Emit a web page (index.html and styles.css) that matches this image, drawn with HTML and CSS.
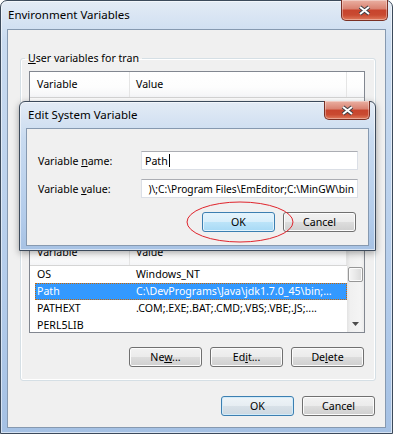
FILE: index.html
```html
<!DOCTYPE html>
<html lang="en">
<head>
    <meta charset="UTF-8">
    <title>Environment Variables</title>
    <link rel="stylesheet" href="styles.css">
</head>
<body>
    <div class="window">
        <div class="titlebar">
            <span class="title">Environment Variables</span>
            <div class="close">
                <svg width="13" height="11" viewBox="0 0 13 11"><path d="M2 2l9 7M11 2l-9 7" stroke="#3d3f44" stroke-width="4"/><path d="M2 2l9 7M11 2l-9 7" stroke="#fff" stroke-width="2"/></svg>
            </div>
        </div>
        <div class="client">
            <!-- lower half of this group sits under the edit dialog -->
            <fieldset class="group group-user">
                <legend><u>U</u>ser variables for tran</legend>
                <div class="list">
                    <div class="list-body">
                        <div class="list-head">
                            <div class="col-name">Variable</div>
                            <div class="col-value">Value</div>
                            <div class="col-fill"></div>
                        </div>
                    </div>
                </div>
            </fieldset>

            <fieldset class="group group-system">
                <legend><u>S</u>ystem variables</legend>
                <div class="list">
                    <div class="list-body">
                        <div class="list-head">
                            <div class="col-name">Variable</div>
                            <div class="col-value">Value</div>
                        </div>
                        <div class="row"><div class="cell-name">OS</div><div class="cell-value">Windows_NT</div></div>
                        <div class="row selected"><div class="cell-name">Path</div><div class="cell-value">C:\DevPrograms\Java\jdk1.7.0_45\bin;...</div></div>
                        <div class="row"><div class="cell-name">PATHEXT</div><div class="cell-value">.COM;.EXE;.BAT;.CMD;.VBS;.VBE;.JS;....</div></div>
                        <div class="row"><div class="cell-name">PERL5LIB</div><div class="cell-value"></div></div>
                    </div>
                    <div class="scrollbar">
                        <div class="arrow"></div>
                        <div class="track"><div class="thumb"></div></div>
                        <div class="arrow">
                            <svg width="7" height="4" viewBox="0 0 7 4"><polygon points="0,0 7,0 3.5,4" fill="#4d4d4d"/></svg>
                        </div>
                    </div>
                </div>
                <div class="btn-row">
                    <button class="btn">Ne<u>w</u>...</button>
                    <button class="btn">Ed<u>i</u>t...</button>
                    <button class="btn">De<u>l</u>ete</button>
                </div>
            </fieldset>

            <div class="btn-row footer-row">
                <button class="btn btn-default">OK</button>
                <button class="btn">Cancel</button>
            </div>
        </div>
    </div>

    <div class="dialog">
        <div class="titlebar">
            <span class="title">Edit System Variable</span>
            <div class="close">
                <svg width="13" height="11" viewBox="0 0 13 11"><path d="M2 2l9 7M11 2l-9 7" stroke="#3d3f44" stroke-width="4"/><path d="M2 2l9 7M11 2l-9 7" stroke="#fff" stroke-width="2"/></svg>
            </div>
        </div>
        <div class="client dialog-client">
            <div class="field">
                <label>Variable <u>n</u>ame:</label>
                <div class="input">Path<span class="caret"></span></div>
            </div>
            <div class="field">
                <label>Variable <u>v</u>alue:</label>
                <div class="input input-scrolled"><span class="value-text">)\;C:\Program Files\EmEditor;C:\MinGW\bin</span></div>
            </div>
            <div class="btn-row dialog-buttons">
                <button class="btn btn-focus">OK</button>
                <button class="btn">Cancel</button>
            </div>
        </div>
    </div>

    <!-- red mark drawn around the OK button -->
    <svg class="marker" width="108" height="42" viewBox="0 0 108 42">
        <ellipse cx="54" cy="21" rx="53" ry="20" fill="none" stroke="#e0242c" stroke-width="1"/>
    </svg>
</body>
</html>
```

FILE: styles.css
```css
body {
    margin: 0;
    width: 394px;
    height: 436px;
    overflow: hidden;
    position: relative;
    background: #fff;
    font-family: "Noto Sans", "Segoe UI", sans-serif;
    font-size: 10.6px;
    color: #000;
}
.window {
    box-sizing: border-box;
    width: 393px;
    height: 434px;
    border: 1px solid #3c4a5b;
    border-radius: 7px 7px 0 0;
    padding: 0 6px 5px;
    display: flex;
    flex-direction: column;
    background: linear-gradient(#e3ebf5, #c9dbf0 40px, #b2cbea 70%, #a5c1e4);
    box-shadow: inset 0 0 0 1px rgba(255,255,255,0.55);
}
.titlebar {
    height: 28px;
    flex-shrink: 0;
    display: flex;
    align-items: flex-start;
}
.title {
    padding: 6px 0 0 1px;
    line-height: 16px;
    font-size: 11.5px;
}
.close {
    box-sizing: border-box;
    width: 47px;
    height: 21px;
    margin: -1px -2px 0 auto;
    border: 1px solid #7a3024;
    border-top: none;
    border-radius: 0 0 5px 5px;
    background: linear-gradient(#eab0a2 0%, #d98170 45%, #c7442d 50%, #c94a31 75%, #df7a5c 100%);
    box-shadow: inset 0 0 0 1px rgba(255,255,255,0.35);
    display: flex;
    align-items: center;
    justify-content: center;
}
.client {
    flex: 1;
    background: #f0f0f0;
    border: 1px solid #8699b0;
    display: flex;
    flex-direction: column;
}
.group {
    margin: 0 9px 0 12px;
    padding: 5px 10px 13px 8px;
    border: 1px solid #d5dfe5;
    border-radius: 3px;
    min-inline-size: 0;
    box-shadow: inset 0 0 0 1px #fff;
}
.group legend {
    margin-left: -4px;
    padding: 0 3px;
    line-height: 16px;
}
.group-user {
    margin-top: 20px;
    padding-bottom: 46px;
}
.group-system {
    margin-top: 6px;
}
.group-system .btn-row {
    margin-top: 14px;
}
.list {
    box-sizing: border-box;
    height: 94px;
    border: 1px solid #828790;
    background: #fff;
    display: flex;
    overflow: hidden;
}
.list-body {
    flex: 1;
    min-width: 0;
}
.list-head {
    display: flex;
    height: 26px;
    box-sizing: border-box;
    border-bottom: 1px solid #d5d5d5;
    background: linear-gradient(#fff, #fdfdfd 60%, #f4f5f7);
}
.list-head > div {
    box-sizing: border-box;
    padding-left: 7px;
    line-height: 25px;
    border-right: 1px solid #e5e5e5;
}
.list-head .col-name {
    width: 100px;
}
.list-head .col-value {
    width: 217px;
    padding-left: 6px;
}
.list-head .col-fill {
    flex: 1;
    border-right: none;
}
.row {
    display: flex;
    height: 17px;
    line-height: 17px;
    margin-left: 5px;
    white-space: nowrap;
}
.cell-name {
    width: 95px;
    padding-left: 2px;
    box-sizing: border-box;
}
.cell-value {
    flex: 1;
    padding-left: 6px;
    overflow: hidden;
}
.row.selected {
    background: #3399ff;
    color: #fff;
    outline: 1px dotted #cc6600;
    outline-offset: -1px;
}
.scrollbar {
    width: 17px;
    flex-shrink: 0;
    display: flex;
    flex-direction: column;
    background: linear-gradient(to right, #e3e3e3, #f0f0f0 20%, #f4f4f4 80%, #ececec);
}
.arrow {
    height: 16px;
    flex-shrink: 0;
    display: flex;
    align-items: center;
    justify-content: center;
}
.track {
    flex: 1;
}
.thumb {
    box-sizing: border-box;
    height: 15px;
    margin: 11px 1px 0;
    border: 1px solid #979797;
    border-radius: 2px;
    background: linear-gradient(to right, #f5f5f5, #e8e8e8 50%, #d9d9d9);
    box-shadow: inset 0 0 0 1px #fbfbfb;
}
.btn-row {
    display: flex;
    justify-content: flex-end;
    gap: 8px;
    margin-top: 13px;
}
.group .btn-row {
    margin-right: 1px;
}
.footer-row {
    margin: 15px 10px 0 0;
}
.btn {
    box-sizing: border-box;
    width: 73px;
    height: 20px;
    padding: 0;
    border: 1px solid #707070;
    border-radius: 3px;
    background: linear-gradient(#f2f2f2 0%, #ebebeb 50%, #dddddd 50%, #cfcfcf 100%);
    box-shadow: inset 0 0 0 1px #fcfcfc;
    font: inherit;
    color: #000;
    line-height: 18px;
}
.btn-default {
    border-color: #3c7fb1;
    background: linear-gradient(#eef4f8 0%, #e6edf2 50%, #d8e1e8 50%, #cdd8e1 100%);
    box-shadow: inset 0 0 0 1px #d2ebf9;
}
.btn-focus {
    border-color: #3c7fb1;
    background: linear-gradient(#e5f4fc 0%, #d7eefb 50%, #bce4f9 50%, #a7d9f5 100%);
    box-shadow: inset 0 0 0 1px #e3f3fc;
}
.dialog {
    position: absolute;
    left: 19px;
    top: 101px;
    box-sizing: border-box;
    width: 357px;
    height: 150px;
    border: 1px solid #3c4a5b;
    border-radius: 6px 6px 0 0;
    padding: 0 6px 4px;
    display: flex;
    flex-direction: column;
    background: linear-gradient(#e3ebf5, #c9dbf0 36px, #b2cbea 80%, #a7c2e4);
    box-shadow: inset 0 0 0 1px rgba(255,255,255,0.55), 0 2px 7px rgba(0,0,0,0.35);
}
.dialog .titlebar {
    height: 26px;
}
.dialog .title {
    padding: 5px 0 0 2px;
}
.dialog .close {
    width: 46px;
    height: 19px;
    margin: -1px -1px 0 auto;
}
.dialog-client {
    padding: 22px 0 13px 11px;
}
.field {
    display: flex;
    align-items: center;
    height: 19px;
    margin-right: 10px;
}
.field + .field {
    margin-top: 9px;
}
.field label {
    width: 103px;
    flex-shrink: 0;
}
.input {
    flex: 1;
    min-width: 0;
    box-sizing: border-box;
    height: 19px;
    padding: 0 4px 0 3px;
    border: 1px solid #dbdfe6;
    border-top-color: #abadb3;
    background: #fff;
    display: flex;
    align-items: center;
    overflow: hidden;
    white-space: nowrap;
}
.input-scrolled {
    justify-content: flex-end;
    padding: 0 3px 0 1px;
}
.value-text {
    font-size: 10.2px;
}
.caret {
    width: 1px;
    height: 13px;
    margin-left: 1px;
    background: #000;
}
.dialog-buttons {
    margin: 14px 12px 0 0;
}
.marker {
    position: absolute;
    left: 186px;
    top: 201px;
}
```
